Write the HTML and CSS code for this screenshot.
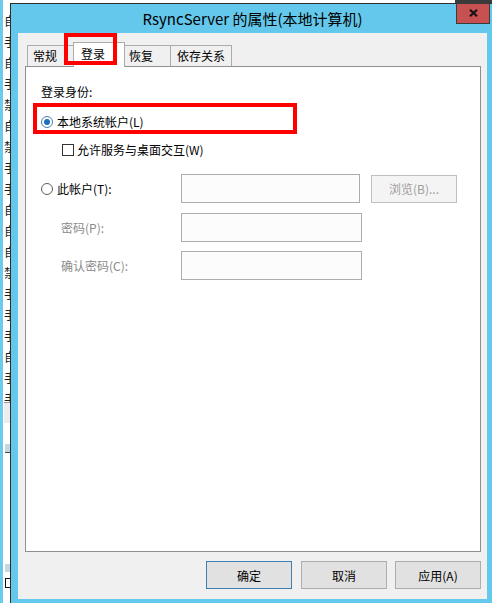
FILE: index.html
```html
<!DOCTYPE html>
<html lang="zh-CN">
<head>
<meta charset="utf-8">
<title>RsyncServer 的属性(本地计算机)</title>
<link rel="stylesheet" href="styles.css">
</head>
<body>
<div class="desk">
  <div class="bg-strip">
    <div class="bg-bar"></div>
    <div class="bg-col">
      <span class="bg-item">自</span><span class="bg-item">手</span><span class="bg-item">自</span><span class="bg-item">手</span><span class="bg-item">禁</span><span class="bg-item">自</span><span class="bg-item">禁</span><span class="bg-item">手</span><span class="bg-item">手</span><span class="bg-item">自</span><span class="bg-item">自</span><span class="bg-item">自</span><span class="bg-item">禁</span><span class="bg-item">手</span><span class="bg-item">手</span><span class="bg-item">手</span><span class="bg-item">自</span><span class="bg-item">手</span><span class="bg-item">手</span>
    </div>
    <div class="bg-grey"></div>
    <div class="bg-sel bg-sel-a"></div>
    <div class="bg-sel bg-sel-b"></div>
    <div class="bg-box"></div>
  </div>
  <div class="bg-top"></div>

  <div class="win">
    <div class="titlebar">RsyncServer 的属性(本地计算机)</div>
    <div class="close">
      <svg width="9" height="8" viewBox="0 0 9 8"><path d="M1 0.8L8 7.2M8 0.8L1 7.2" stroke="#151515" stroke-width="2.2" fill="none"/></svg>
    </div>
    <div class="client">
      <div class="tabs">
        <div class="tab tab-general">常规</div>
        <div class="tab tab-logon active">登录</div>
        <div class="tab tab-recover">恢复</div>
        <div class="tab tab-deps">依存关系</div>
      </div>
      <div class="panel">
        <div class="section-title">登录身份:</div>
        <div class="opt-row">
          <span class="radio checked"></span>
          <span class="opt-text">本地系统帐户(L)</span>
        </div>
        <div class="check-row">
          <span class="checkbox"></span>
          <span class="check-text">允许服务与桌面交互(W)</span>
        </div>
        <div class="acct-row">
          <div class="lbl-col">
            <span class="radio"></span>
            <span class="opt-text">此帐户(T):</span>
          </div>
          <div class="input input-acct"></div>
          <div class="browse">浏览(B)...</div>
        </div>
        <div class="field-row field-pw">
          <div class="field-label">密码(P):</div>
          <div class="input"></div>
        </div>
        <div class="field-row field-confirm">
          <div class="field-label">确认密码(C):</div>
          <div class="input"></div>
        </div>
      </div>
      <div class="actions">
        <div class="btn btn-default btn-ok">确定</div>
        <div class="btn btn-cancel">取消</div>
        <div class="btn">应用(A)</div>
      </div>
    </div>
  </div>

  <div class="mark mark-tab"></div>
  <div class="mark mark-opt"></div>
</div>
</body>
</html>
```
FILE: styles.css
```css
* { box-sizing: border-box; }
html, body { margin: 0; padding: 0; }
body {
  width: 492px;
  height: 608px;
  overflow: hidden;
  background: #ffffff;
  font-family: "Noto Sans CJK SC", "Noto Sans", "Liberation Sans", sans-serif;
  font-size: 12px;
  color: #000;
}
.desk {
  position: relative;
  width: 492px;
  height: 608px;
  overflow: hidden;
}

/* background (services list behind the dialog) */
.bg-strip {
  position: absolute;
  left: 0;
  top: 0;
  width: 10px;
  height: 608px;
  overflow: hidden;
}
.bg-bar {
  position: absolute;
  left: 0;
  top: 0;
  width: 3px;
  height: 603px;
  background: #6ccbec;
}
.bg-col {
  position: absolute;
  left: 4px;
  top: 10px;
  display: flex;
  flex-direction: column;
}
.bg-item {
  display: block;
  height: 21px;
  line-height: 21px;
  font-size: 12px;
  color: #1b1b1b;
  white-space: nowrap;
}
.bg-grey {
  position: absolute;
  left: 4px;
  top: 402px;
  width: 6px;
  height: 21px;
  background: #ececec;
  border-top: 1px solid #9a9a9a;
}
.bg-sel {
  position: absolute;
  left: 5px;
  width: 5px;
  background: #c6d7de;
}
.bg-sel-a { top: 444px; height: 9px; border-bottom: 1px solid #4a4a4a; }
.bg-sel-b { top: 564px; height: 8px; }
.bg-box {
  position: absolute;
  left: 5px;
  top: 578px;
  width: 6px;
  height: 10px;
  border: 1px solid #111;
}
.bg-top {
  position: absolute;
  left: 455px;
  top: 0;
  width: 37px;
  height: 3px;
  background: #3a3a3a;
}

/* window */
.win {
  position: absolute;
  left: 10px;
  top: 3px;
  width: 484px;
  height: 600px;
  background: #63c8eb;
  border-left: 1px solid #2e2e2e;
  border-top: 1px solid #2e2e2e;
  padding: 0 7px 4px 7px;
  display: flex;
  flex-direction: column;
}
.titlebar {
  height: 29px;
  flex: none;
  display: flex;
  align-items: center;
  justify-content: center;
  font-size: 15px;
  color: #000;
  white-space: nowrap;
}
.close {
  position: absolute;
  left: 445px;
  top: -1px;
  width: 34px;
  height: 21px;
  background: #c75050;
  border: 1px solid #3b3b3b;
  display: flex;
  align-items: center;
  justify-content: center;
}
.close svg { display: block; margin-top: -1px; }

.client {
  flex: 1;
  background: #f0f0f0;
  padding: 9px 6px 10px 7px;
  display: flex;
  flex-direction: column;
}

/* tabs */
.tabs {
  display: flex;
  align-items: flex-end;
  height: 24px;
  flex: none;
  padding-left: 2px;
  position: relative;
  z-index: 1;
}
.tab {
  height: 21px;
  border: 1px solid #acacac;
  border-bottom: none;
  background: #f0f0f0;
  margin-left: -1px;
  line-height: 19px;
  white-space: nowrap;
  color: #000;
}
.tab-general { width: 47px; padding-left: 5px; margin-left: 0; }
.tab-logon { width: 52px; padding-left: 7px; }
.tab-recover { width: 47px; padding-left: 4px; }
.tab-deps { width: 62px; padding-left: 6px; }
.tab.active {
  height: 25px;
  background: #ffffff;
  margin-bottom: -1px;
  padding-top: 3px;
  line-height: 16px;
  position: relative;
  z-index: 2;
}

/* tab page */
.panel {
  flex: 1;
  background: #ffffff;
  border: 1px solid #8e8f8f;
  padding: 17px 15px 0 15px;
  display: flex;
  flex-direction: column;
}
.section-title {
  line-height: 16px;
  height: 16px;
}
.opt-row {
  margin-top: 14px;
  height: 16px;
  display: flex;
  align-items: center;
}
.radio {
  width: 12px;
  height: 12px;
  flex: none;
  border-radius: 50%;
  border: 1px solid #5e5e5e;
  background: #fff;
  display: flex;
  align-items: center;
  justify-content: center;
}
.radio.checked { border-color: #4d7fa9; }
.radio.checked::after {
  content: "";
  width: 6px;
  height: 6px;
  border-radius: 50%;
  background: #1e6fc1;
}
.opt-text {
  margin-left: 4px;
  line-height: 16px;
  white-space: nowrap;
}
.check-row {
  margin-top: 12px;
  height: 16px;
  padding-left: 21px;
  display: flex;
  align-items: center;
}
.checkbox {
  width: 12px;
  height: 12px;
  flex: none;
  border: 1px solid #333;
  background: #fff;
}
.check-text {
  margin-left: 3px;
  line-height: 16px;
  white-space: nowrap;
}
.acct-row {
  margin-top: 16px;
  height: 29px;
  display: flex;
  align-items: center;
}
.lbl-col {
  width: 140px;
  flex: none;
  display: flex;
  align-items: center;
}
.input {
  width: 181px;
  height: 29px;
  flex: none;
  border: 1px solid #adadad;
  background: #fcfcfc;
}
.input-acct { width: 179px; }
.browse {
  margin-left: 11px;
  width: 86px;
  height: 28px;
  flex: none;
  border: 1px solid #bfbfbf;
  background: #f4f4f4;
  color: #9d9d9d;
  display: flex;
  align-items: center;
  justify-content: center;
  white-space: nowrap;
}
.field-row {
  height: 29px;
  display: flex;
  align-items: center;
}
.field-pw { margin-top: 10px; }
.field-confirm { margin-top: 9px; }
.field-label {
  width: 140px;
  flex: none;
  padding-left: 20px;
  color: #8a8a8a;
  white-space: nowrap;
}

/* dialog buttons */
.actions {
  margin-top: 9px;
  height: 28px;
  flex: none;
  display: flex;
  justify-content: flex-end;
}
.btn {
  width: 86px;
  height: 28px;
  border: 1px solid #adadad;
  background: #e1e1e1;
  display: flex;
  align-items: center;
  justify-content: center;
  white-space: nowrap;
}
.btn-default { border-color: #3c7fb1; }
.btn-ok { margin-right: 9px; }
.btn-cancel { margin-right: 8px; }

/* red annotation boxes */
.mark {
  position: absolute;
  z-index: 10;
  border: 4px solid #ff0000;
}
.mark-tab {
  left: 64px;
  top: 33px;
  width: 53px;
  height: 32px;
}
.mark-opt {
  left: 33px;
  top: 103px;
  width: 264px;
  height: 31px;
}
```
